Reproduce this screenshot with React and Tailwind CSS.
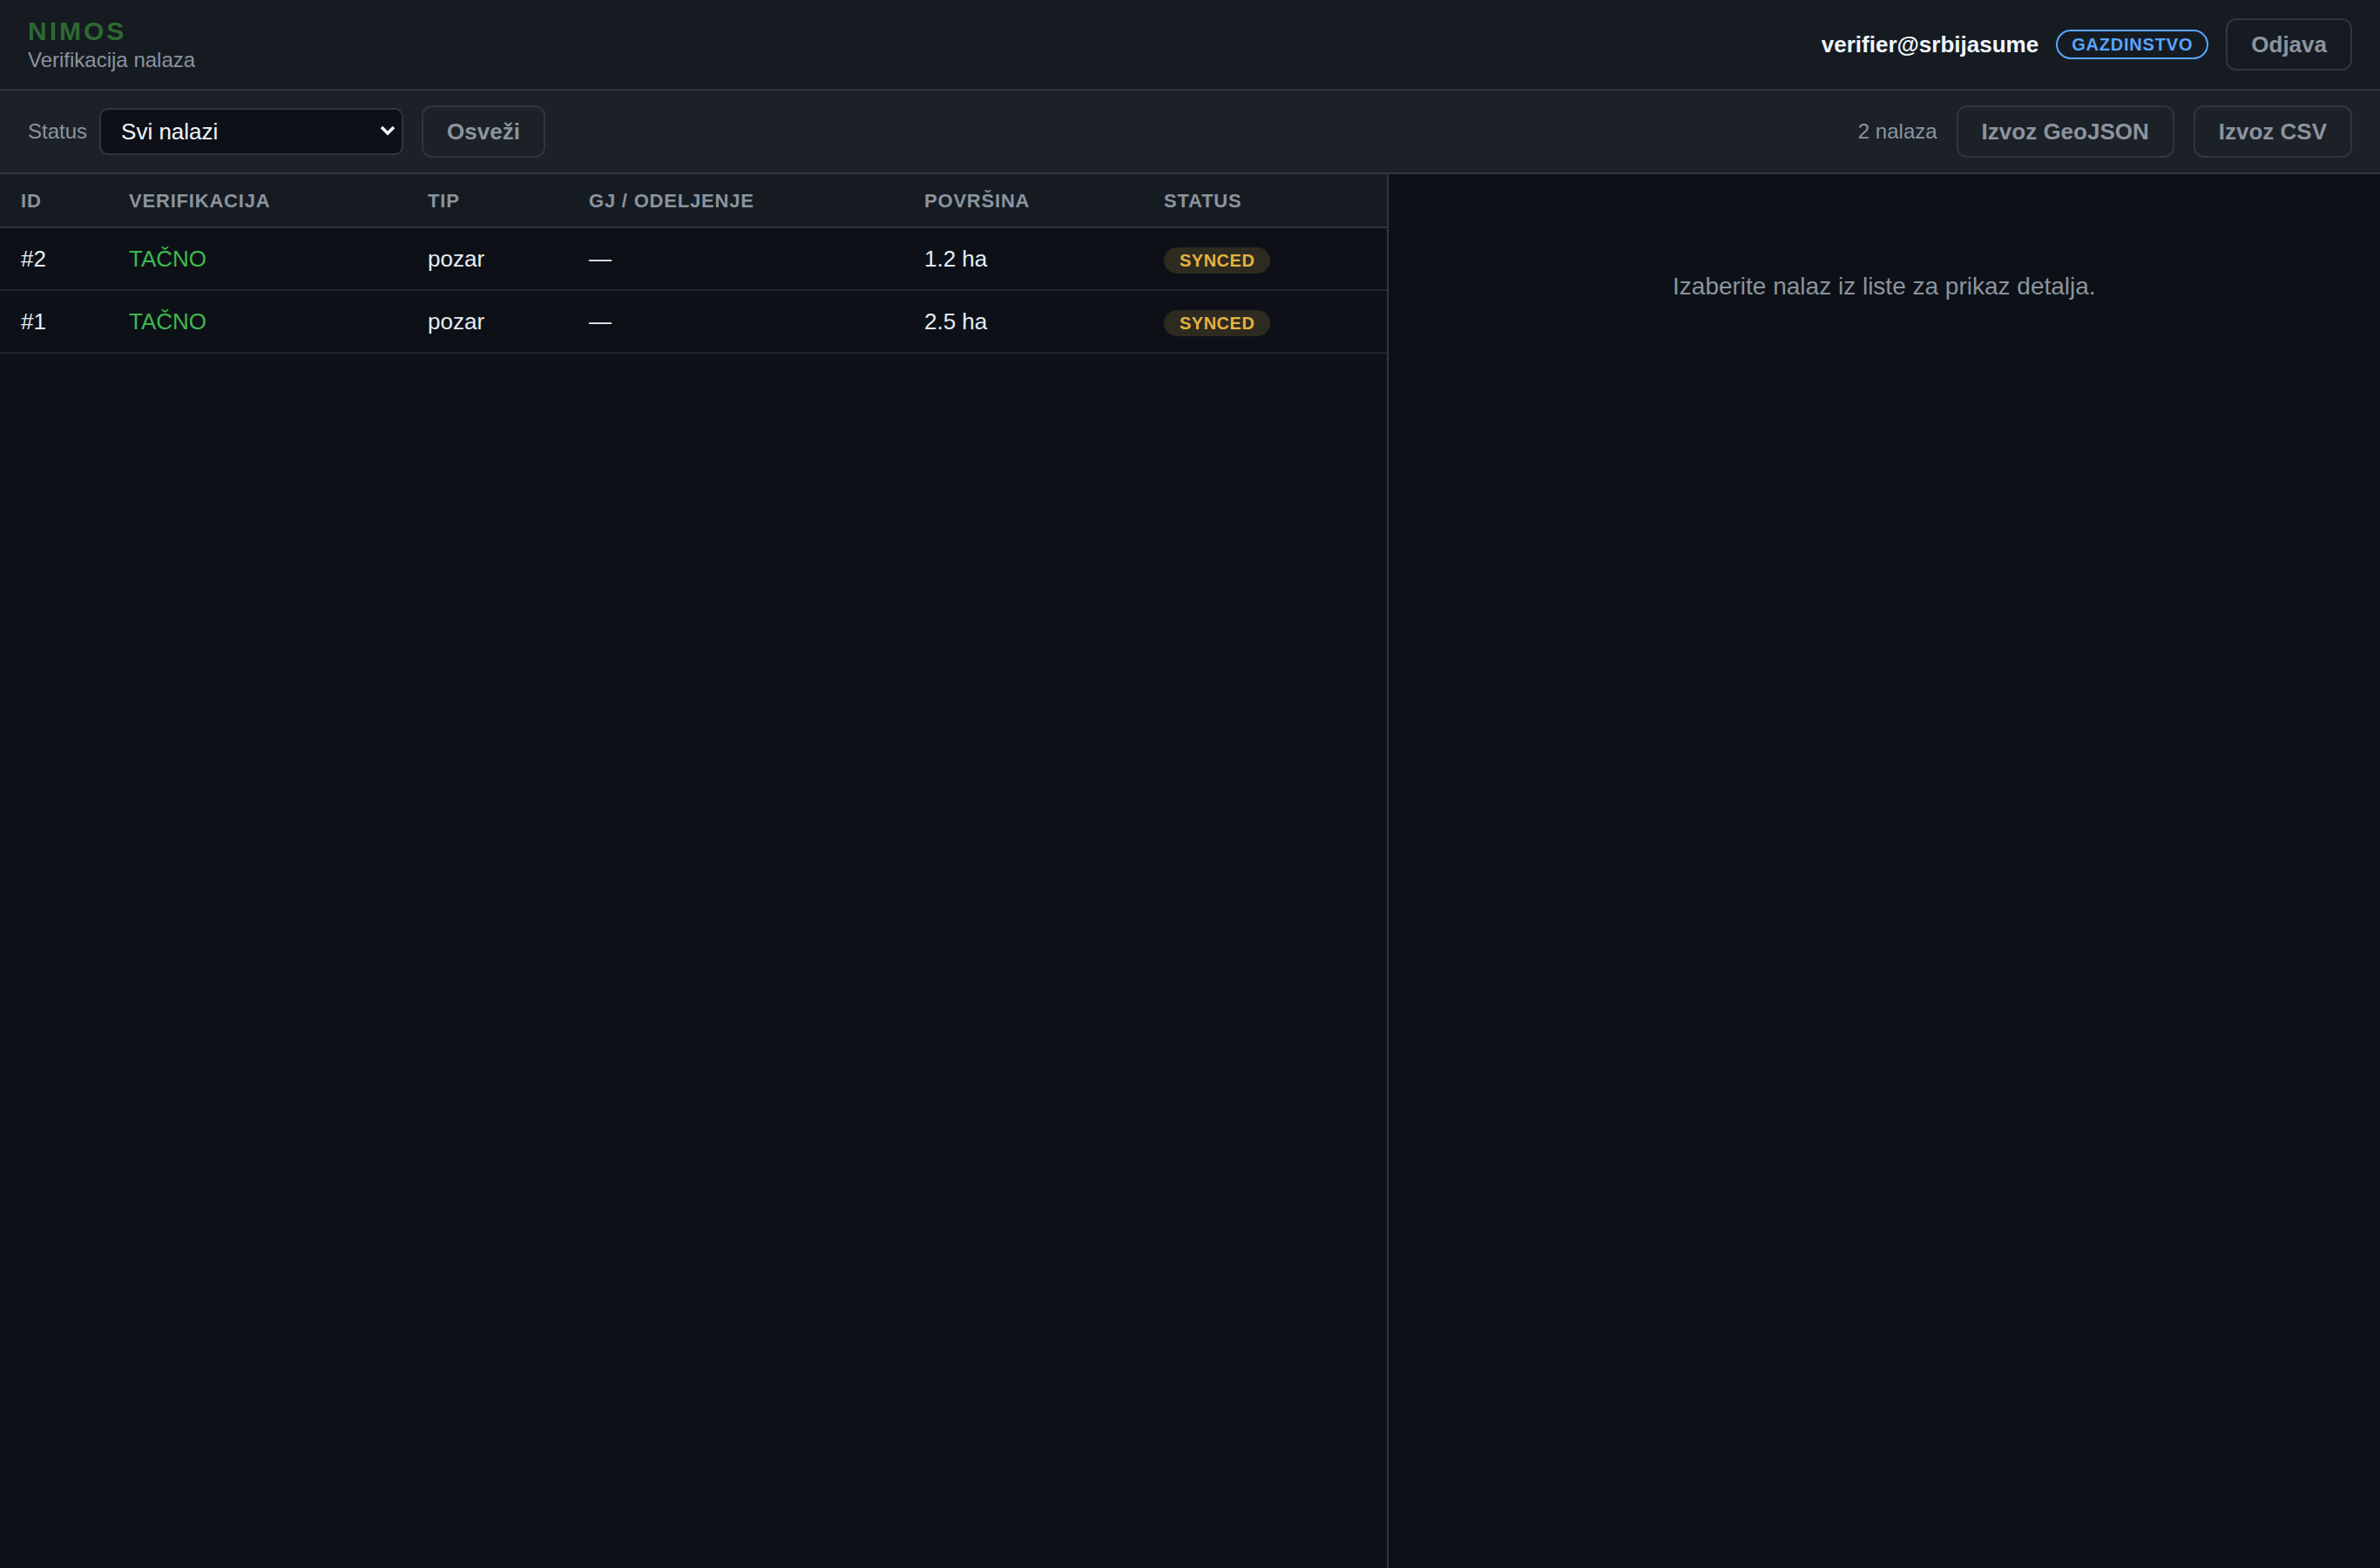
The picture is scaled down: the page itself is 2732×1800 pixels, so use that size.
import React, { useState } from "react";

const findings = [
  { id: 2, verification: "TAČNO", type: "pozar", unit: "—", area: "1.2 ha", status: "SYNCED" },
  { id: 1, verification: "TAČNO", type: "pozar", unit: "—", area: "2.5 ha", status: "SYNCED" },
];

const cols = "grid grid-cols-[124px_343px_185px_385px_275px_1fr]";

export default function App() {
  const [status, setStatus] = useState("all");

  return (
    <div className="h-screen flex flex-col bg-[#0d1117] font-['Liberation_Sans',Arial,sans-serif]">
      <header className="h-[104px] shrink-0 flex items-center justify-between px-8 bg-[#161b22] border-b-2 border-[#30363d]">
        <div className="flex flex-col">
          <span className="text-[30px] leading-[32px] font-bold tracking-[3px] text-[#2d6a30]">NIMOS</span>
          <span className="text-[24px] leading-[28px] mt-[3px] text-[#8b949e]">Verifikacija nalaza</span>
        </div>
        <div className="flex items-center gap-5">
          <span className="text-[26px] font-bold text-[#f0f6fc]">verifier@srbijasume</span>
          <span className="h-[34px] px-4 flex items-center rounded-full border-2 border-[#58a6ff] text-[20px] font-bold tracking-[0.8px] text-[#58a6ff]">
            GAZDINSTVO
          </span>
          <button className="h-[60px] px-[27px] rounded-[12px] border-2 border-[#30363d] text-[26px] font-bold text-[#8b949e]">
            Odjava
          </button>
        </div>
      </header>

      <div className="h-[96px] shrink-0 flex items-center justify-between px-8 bg-[#1c2128] border-b-2 border-[#30363d]">
        <div className="flex items-center">
          <label className="text-[24px] text-[#8b949e] mr-[14px]">Status</label>
          <div className="relative">
            <select
              value={status}
              onChange={e => setStatus(e.target.value)}
              className="appearance-none w-[349px] h-[54px] pl-[23px] rounded-[10px] border-2 border-[#30363d] bg-[#0d1117] text-[26px] text-[#f0f6fc] outline-none"
            >
              <option value="all">Svi nalazi</option>
              <option value="pending">Na čekanju</option>
              <option value="verified">Verifikovani</option>
            </select>
            <svg className="absolute right-[9px] top-[19px] pointer-events-none" width="18" height="14" viewBox="0 0 18 14">
              <path d="M2 3 L9 10 L16 3" fill="none" stroke="#f0f6fc" strokeWidth="3.5" />
            </svg>
          </div>
          <button className="ml-[21px] h-[60px] px-[27px] rounded-[12px] border-2 border-[#30363d] text-[26px] font-bold text-[#8b949e]">
            Osveži
          </button>
        </div>
        <div className="flex items-center gap-[22px]">
          <span className="text-[24px] text-[#8b949e]">{findings.length} nalaza</span>
          <button className="h-[60px] px-[27px] rounded-[12px] border-2 border-[#30363d] text-[26px] font-bold text-[#8b949e]">
            Izvoz GeoJSON
          </button>
          <button className="h-[60px] px-[27px] rounded-[12px] border-2 border-[#30363d] text-[26px] font-bold text-[#8b949e]">
            Izvoz CSV
          </button>
        </div>
      </div>

      <div className="flex-1 grid grid-cols-[7fr_5fr] min-h-0">
        <div className="border-r-2 border-[#30363d]">
          <div className={`${cols} h-[62px] items-center bg-[#161b22] border-b-2 border-[#30363d] text-[22px] font-bold tracking-[0.8px] text-[#8b949e]`}>
            <div className="px-6">ID</div>
            <div className="px-6">VERIFIKACIJA</div>
            <div className="px-6">TIP</div>
            <div className="px-6">GJ / ODELJENJE</div>
            <div className="px-6">POVRŠINA</div>
            <div className="px-6">STATUS</div>
          </div>
          {findings.map(f => (
            <div key={f.id} className={`${cols} h-[72px] items-center border-b-2 border-[#21262d] text-[26px] text-[#e6edf3]`}>
              <div className="px-6">#{f.id}</div>
              <div className="px-6 text-[#3fb950]">{f.verification}</div>
              <div className="px-6">{f.type}</div>
              <div className="px-6">{f.unit}</div>
              <div className="px-6">{f.area}</div>
              <div className="px-6">
                <span className="inline-flex items-center h-[30px] px-[18px] rounded-full bg-[#2d2a1f] text-[20px] font-bold tracking-[0.5px] text-[#e3b341]">
                  {f.status}
                </span>
              </div>
            </div>
          ))}
        </div>
        <div className="pt-[113px] text-center text-[28px] leading-[32px] text-[#8b949e]">
          Izaberite nalaz iz liste za prikaz detalja.
        </div>
      </div>
    </div>
  );
}
